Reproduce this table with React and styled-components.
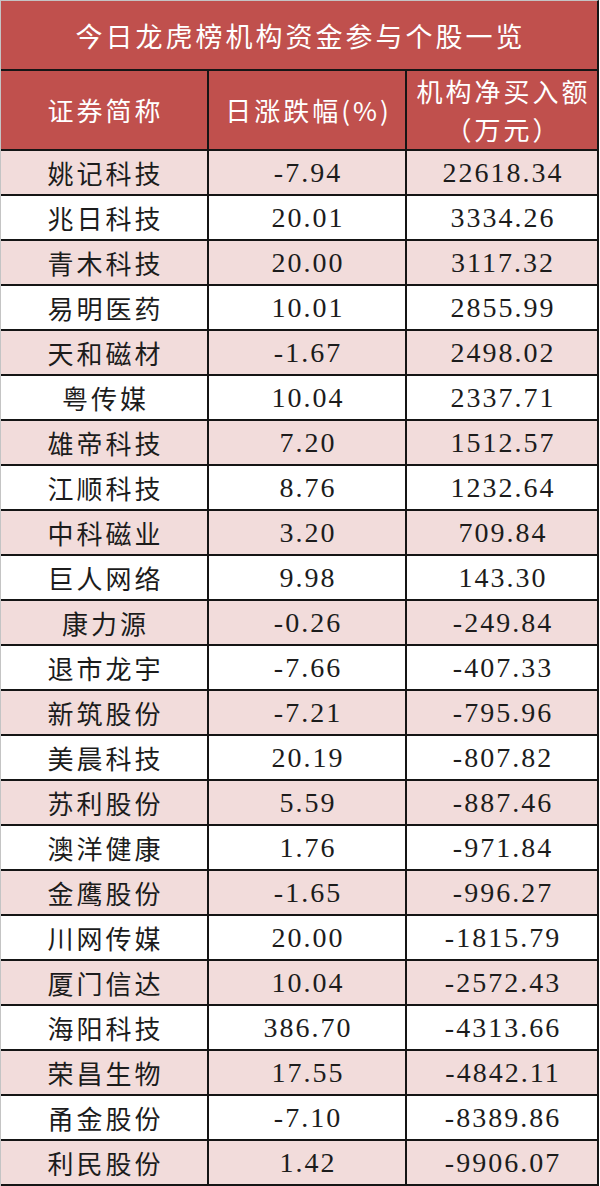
import React from "react"
import styled, { createGlobalStyle } from "styled-components"

const GlobalStyle = createGlobalStyle`
  html, body {
    margin: 0;
    padding: 0;
    background: #fff;
  }
  * {
    box-sizing: border-box;
  }
`

const Table = styled.div`
  width: 599px;
  border-left: 1px solid #c4c4c4;
  border-top: 1px solid #c4c4c4;
  border-right: 2px solid #151515;
  font-family: "Noto Sans CJK SC", sans-serif;
`

const Title = styled.div`
  height: 70px;
  background: #c0504d;
  border-bottom: 2px solid #151515;
  color: #fff;
  font-size: 27px;
  letter-spacing: 3px;
  padding-left: 3px;
  display: flex;
  align-items: center;
  justify-content: center;
`

const Row = styled.div`
  display: grid;
  grid-template-columns: 208px 198px 1fr;
  height: ${(p) => (p.head ? "80px" : "45px")};
  background: ${(p) => (p.head ? "#c0504d" : p.shade ? "#f2dcdb" : "#fff")};
  border-bottom: 2px solid #151515;
  color: ${(p) => (p.head ? "#fff" : "#1c1c1c")};
`

const Cell = styled.div`
  display: flex;
  flex-direction: column;
  align-items: center;
  justify-content: center;
  border-right: ${(p) => (p.last ? "none" : "2px solid #151515")};
  font-size: 26px;
  line-height: 38px;
  letter-spacing: 3px;
  padding-left: 3px;
  white-space: nowrap;
`

const Num = styled(Cell)`
  font-family: "Liberation Serif", serif;
  font-size: 28px;
  letter-spacing: 2px;
  padding-left: 2px;
`

const rows = [
  ["姚记科技", "-7.94", "22618.34"],
  ["兆日科技", "20.01", "3334.26"],
  ["青木科技", "20.00", "3117.32"],
  ["易明医药", "10.01", "2855.99"],
  ["天和磁材", "-1.67", "2498.02"],
  ["粤传媒", "10.04", "2337.71"],
  ["雄帝科技", "7.20", "1512.57"],
  ["江顺科技", "8.76", "1232.64"],
  ["中科磁业", "3.20", "709.84"],
  ["巨人网络", "9.98", "143.30"],
  ["康力源", "-0.26", "-249.84"],
  ["退市龙宇", "-7.66", "-407.33"],
  ["新筑股份", "-7.21", "-795.96"],
  ["美晨科技", "20.19", "-807.82"],
  ["苏利股份", "5.59", "-887.46"],
  ["澳洋健康", "1.76", "-971.84"],
  ["金鹰股份", "-1.65", "-996.27"],
  ["川网传媒", "20.00", "-1815.79"],
  ["厦门信达", "10.04", "-2572.43"],
  ["海阳科技", "386.70", "-4313.66"],
  ["荣昌生物", "17.55", "-4842.11"],
  ["甬金股份", "-7.10", "-8389.86"],
  ["利民股份", "1.42", "-9906.07"],
]

const App = () => {
  return (
    <>
      <GlobalStyle />
      <Table>
        <Title>今日龙虎榜机构资金参与个股一览</Title>
        <Row head>
          <Cell>证券简称</Cell>
          <Cell>日涨跌幅(%)</Cell>
          <Cell last>
            <span>机构净买入额</span>
            <span>（万元）</span>
          </Cell>
        </Row>
        {rows.map((r, i) => (
          <Row key={i} shade={i % 2 === 0}>
            <Cell>{r[0]}</Cell>
            <Num>{r[1]}</Num>
            <Num last>{r[2]}</Num>
          </Row>
        ))}
      </Table>
    </>
  )
}

export default App
